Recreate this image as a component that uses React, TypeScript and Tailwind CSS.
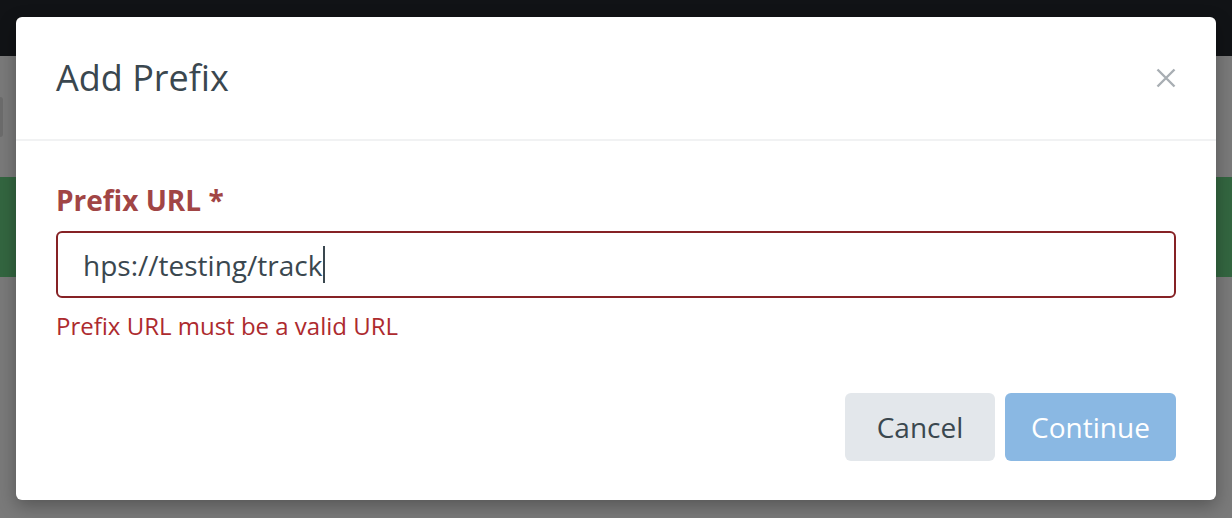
export default function App() {
  return (
    <div className="relative h-[518px] w-[1232px] overflow-hidden bg-[#7a7a7a] font-['Open_Sans',sans-serif]">
      {/* page behind the overlay */}
      <div className="h-[56px] bg-[#111316]" />
      <div className="flex flex-col">
        <div className="mt-[41px] h-[40px] w-[3px] rounded-r bg-[#6c6c6c]" />
        <div className="mt-[40px] h-[100px] bg-[#336640]" />
      </div>

      {/* modal */}
      <div className="absolute left-[16px] top-[17px] w-[1200px] rounded-[6px] bg-white shadow-[0_6px_18px_rgba(0,0,0,0.3)]">
        <div className="flex h-[124px] items-center justify-between border-b-2 border-[#f1f2f3] px-10">
          <h2 className="text-[36px] font-normal leading-[1.362] text-[#3a474f]">Add Prefix</h2>
          <button className="flex h-[20px] w-[20px] items-center justify-center" aria-label="Close">
            <svg width="20" height="20" viewBox="0 0 20 20" fill="none" stroke="#a8aeb3" strokeWidth="2.4">
              <path d="M1.5 1.5 L18.5 18.5 M18.5 1.5 L1.5 18.5" />
            </svg>
          </button>
        </div>

        <div className="px-10 pt-[40px] pb-[39px]">
          <label className="block text-[28px] font-bold leading-[1.362] text-[#a14545]">Prefix URL *</label>
          <div className="mt-[12px] flex h-[67px] items-center rounded-[6px] border-2 border-[#862225] px-[25px]">
            <span className="text-[28px] leading-none text-[#3a474f]">hps://testing/track</span>
            <span className="ml-[1px] h-[37px] w-[2px] bg-[#3a474f]" />
          </div>
          <p className="mt-[12px] text-[24px] leading-[1.362] text-[#ad2a2e]">Prefix URL must be a valid URL</p>

          <div className="mt-[50px] flex justify-end gap-[10px]">
            <button className="flex h-[68px] w-[150px] items-center justify-center rounded-[6px] bg-[#e3e7eb] text-[28px] text-[#3a474f]">
              Cancel
            </button>
            <button className="flex h-[68px] w-[171px] items-center justify-center rounded-[6px] bg-[#8ab8e3] text-[28px] text-white">
              Continue
            </button>
          </div>
        </div>
      </div>
    </div>
  )
}
